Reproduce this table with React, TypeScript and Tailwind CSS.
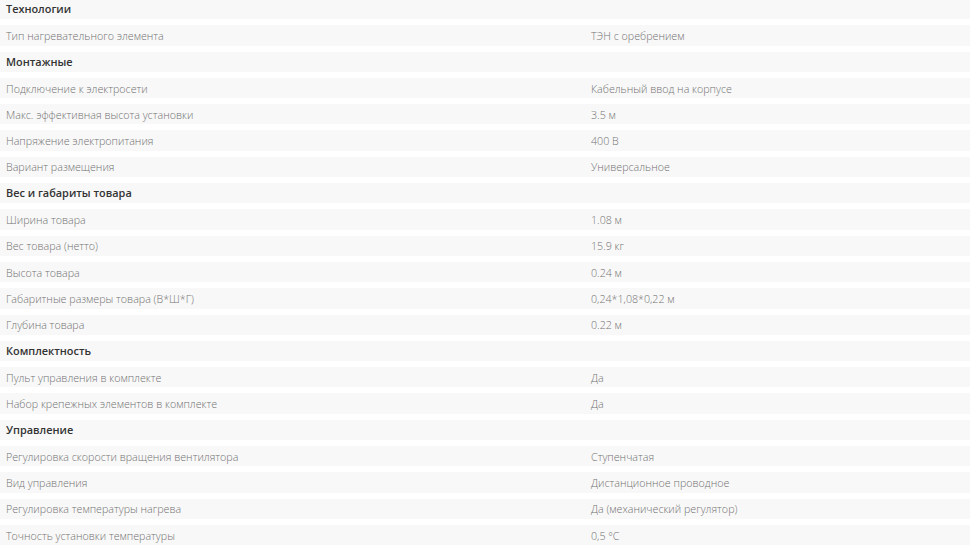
const groups: { title: string; rows: [string, string][] }[] = [
  { title: 'Технологии', rows: [['Тип нагревательного элемента', 'ТЭН с оребрением']] },
  {
    title: 'Монтажные',
    rows: [
      ['Подключение к электросети', 'Кабельный ввод на корпусе'],
      ['Макс. эффективная высота установки', '3.5 м'],
      ['Напряжение электропитания', '400 В'],
      ['Вариант размещения', 'Универсальное'],
    ],
  },
  {
    title: 'Вес и габариты товара',
    rows: [
      ['Ширина товара', '1.08 м'],
      ['Вес товара (нетто)', '15.9 кг'],
      ['Высота товара', '0.24 м'],
      ['Габаритные размеры товара (В*Ш*Г)', '0,24*1,08*0,22 м'],
      ['Глубина товара', '0.22 м'],
    ],
  },
  {
    title: 'Комплектность',
    rows: [
      ['Пульт управления в комплекте', 'Да'],
      ['Набор крепежных элементов в комплекте', 'Да'],
    ],
  },
  {
    title: 'Управление',
    rows: [
      ['Регулировка скорости вращения вентилятора', 'Ступенчатая'],
      ['Вид управления', 'Дистанционное проводное'],
      ['Регулировка температуры нагрева', 'Да (механический регулятор)'],
      ['Точность установки температуры', '0,5 °C'],
    ],
  },
];

export default function App() {
  return (
    <div className="w-[970px] h-[547px] overflow-hidden bg-white font-['Open_Sans',sans-serif] text-[10.7px]">
      <div className="flex flex-col gap-[6px] -mt-px">
        {groups.map((g) => (
          <div key={g.title} className="contents">
            <div className="h-[20.3px] bg-[#f8f8f8] flex items-center pl-[6px] font-semibold text-[#333] text-[10.9px]">
              {g.title}
            </div>
            {g.rows.map(([label, value]) => (
              <div key={label} className="h-[20.3px] bg-[#f8f8f8] flex items-center pt-px text-[#727272] font-light">
                <div className="w-[591px] pl-[6px] shrink-0">{label}</div>
                <div>{value}</div>
              </div>
            ))}
          </div>
        ))}
      </div>
    </div>
  );
}
